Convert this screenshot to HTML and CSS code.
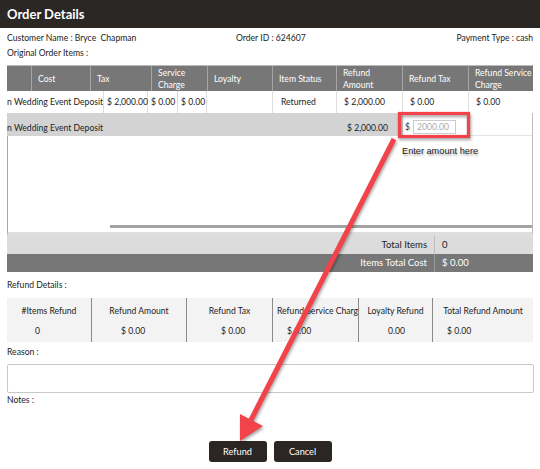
FILE: index.html
```html
<!DOCTYPE html>
<html>
<head>
<meta charset="utf-8">
<link rel="stylesheet" href="styles.css">
</head>
<body>
<div class="page">
  <div class="title">Order Details</div>
  <div class="info">
    <span>Customer Name : Bryce &nbsp;Chapman</span>
    <span>Order ID : 624607</span>
    <span class="pay">Payment Type : cash</span>
  </div>
  <div class="label first">Original Order Items :</div>

  <div class="grid">
    <div class="hdr">
      <div class="c"></div>
      <div class="c">Cost</div>
      <div class="c">Tax</div>
      <div class="c">Service<br>Charge</div>
      <div class="c">Loyalty</div>
      <div class="c">Item Status</div>
      <div class="c">Refund<br>Amount</div>
      <div class="c">Refund Tax</div>
      <div class="c">Refund Service<br>Charge</div>
    </div>
    <div class="row1">
      <div class="c name">n Wedding Event Deposit</div>
      <div class="c">$ 2,000.00</div>
      <div class="c">$ 0.00</div>
      <div class="c">$ 0.00</div>
      <div class="c"></div>
      <div class="c">Returned</div>
      <div class="c">$ 2,000.00</div>
      <div class="c">$ 0.00</div>
      <div class="c">$ 0.00</div>
    </div>
    <div class="row2">
      <div class="shade">
        <span class="name">n Wedding Event Deposit</span>
        <span class="amt">$ 2,000.00</span>
      </div>
      <div class="inputcell">
        <span class="cur">$</span>
        <input class="amount" type="text" placeholder="2000.00">
      </div>
      <div class="blank"></div>
    </div>
    <div class="body">
      <div class="scroll"></div>
    </div>
    <div class="tot light">
      <div class="tl">Total Items</div>
      <div class="tv">0</div>
    </div>
    <div class="tot dark">
      <div class="tl">Items Total Cost</div>
      <div class="tv">$ 0.00</div>
    </div>
  </div>

  <div class="label refund-label">Refund Details :</div>
  <div class="refund">
    <div class="rc"><div class="rh">#Items Refund</div><div class="rv">0</div></div>
    <div class="rc"><div class="rh">Refund Amount</div><div class="rv">$ 0.00</div></div>
    <div class="rc"><div class="rh">Refund Tax</div><div class="rv">$ 0.00</div></div>
    <div class="rc"><div class="rh">Refund Service Charge</div><div class="rv">$ 0.00</div></div>
    <div class="rc"><div class="rh">Loyalty Refund</div><div class="rv">0.00</div></div>
    <div class="rc"><div class="rh">Total Refund Amount</div><div class="rv">$ 0.00</div></div>
  </div>

  <div class="label reason">Reason :</div>
  <div class="textbox"></div>
  <div class="label notes">Notes :</div>

  <div class="buttons">
    <button class="btn">Refund</button>
    <button class="btn">Cancel</button>
  </div>

  <svg class="annot" width="540" height="469" viewBox="0 0 540 469">
    <g class="red">
      <rect x="399.5" y="113.5" width="69" height="23" fill="none" stroke="#f2434b" stroke-width="3.2"/>
      <line x1="394" y1="139" x2="251" y2="420" stroke="#f2434b" stroke-width="5"/>
      <polygon points="240,441 240,414 263,426" fill="#f2434b"/>
    </g>
  </svg>
  <div class="hint">Enter amount here</div>
</div>
</body>
</html>
```

FILE: styles.css
```css
* { box-sizing: border-box; }
html, body { margin: 0; padding: 0; background: #fff; }
body {
  font-family: Lato, "Open Sans", sans-serif;
  font-size: 8.6px;
  color: #222;
}
.page {
  position: relative;
  width: 540px;
  height: 469px;
  overflow: hidden;
}
.title {
  height: 28px;
  line-height: 28px;
  background: #2b2724;
  color: #fff;
  font-size: 13px;
  font-weight: bold;
  padding-left: 7px;
}
.info {
  display: grid;
  grid-template-columns: 229px 1fr auto;
  margin: 3px 7px 0 7px;
  height: 14px;
  line-height: 14px;
}
.label {
  height: 14px;
  line-height: 14px;
  padding-left: 7px;
}
.label.first { margin-top: 1px; margin-bottom: 5px; }

.grid {
  margin: 0 7px;
  width: 526px;
}
.hdr, .row1 {
  display: grid;
}
.hdr {
  grid-template-columns: 25px 59px 61px 56px 65px 64px 66px 66px 64px;
  height: 26px;
  background: #777;
  color: #fff;
  border-top: 1px solid #bbb;
}
.hdr .c {
  display: flex;
  align-items: center;
  padding-left: 6px;
  line-height: 12px;
  border-right: 1px solid #a5a5a5;
  white-space: nowrap;
}
.hdr .c:last-child { border-right: none; }
.row1 {
  grid-template-columns: 97px 44px 30px 29px 66px 64px 66px 66px 64px;
  height: 22px;
  align-items: stretch;
}
.row1 .c {
  display: flex;
  align-items: center;
  padding-left: 3px;
  border-right: 1px solid #ddd;
  white-space: nowrap;
}
.row1 .c:nth-child(6) { padding-left: 8px; }
.row1 .c:nth-child(7),
.row1 .c:nth-child(8),
.row1 .c:nth-child(9) { padding-left: 7px; }
.row1 .c:last-child { border-right: none; }
.row1 .c.name { padding-left: 0; overflow: hidden; }

.row2 {
  display: grid;
  grid-template-columns: 396px 66px 64px;
  height: 23px;
}
.shade {
  background: #d3d3d3;
  display: flex;
  align-items: flex-end;
  padding-bottom: 2px;
  line-height: 12px;
}
.shade .name { width: 340px; }
.inputcell {
  display: flex;
  align-items: flex-end;
  padding-bottom: 1px;
  padding-left: 2px;
  border-bottom: 1px solid #e2e2e2;
}
.cur {
  color: #2b3140;
  margin-right: 3px;
  line-height: 14px;
}
.amount {
  width: 43px;
  height: 14px;
  border: 1px solid #ccc;
  padding: 0 0 0 3px;
  font-family: Lato, sans-serif;
  font-size: 8.6px;
  color: #aaa;
  outline: none;
}
.amount::placeholder { color: #aaa; }
.blank {
  border-bottom: 1px solid #e2e2e2;
  border-right: 1px solid #bbb;
}
.body {
  height: 100px;
  border-left: 1px solid #a8a8a8;
  border-right: 1px solid #bbb;
  border-bottom: 4px solid #dedede;
  display: flex;
  flex-direction: column;
  justify-content: flex-end;
  padding-bottom: 4px;
}
.scroll {
  margin-left: 102px;
  height: 3px;
  background: #a3a3a3;
}
.tot {
  display: grid;
  grid-template-columns: 428px 1fr;
  height: 18px;
  line-height: 18px;
  font-size: 9.5px;
}
.tot .tl {
  text-align: right;
  padding-right: 7px;
  border-right: 1px solid #bdbdbd;
}
.tot .tv { padding-left: 7px; }
.tot.light { background: #dcdcdc; }
.tot.dark { background: #777; color: #fff; }
.tot.dark .tl { border-right-color: #9a9a9a; }

.refund-label { margin-top: 6px; margin-bottom: 6px; }
.refund {
  margin: 0 7px;
  display: grid;
  grid-template-columns: 84px 95px 86px 86px 74px 101px;
  height: 44px;
  background: #f3f3f3;
}
.rc {
  display: flex;
  flex-direction: column;
  border-left: 1px solid #8a8a8a;
  overflow: hidden;
  white-space: nowrap;
}
.rc:first-child { border-left: none; }
.rh {
  height: 26px;
  line-height: 26px;
  text-align: center;
}
.rv { height: 14px; line-height: 14px; }
.rc:nth-child(1) .rv { padding-left: 28px; }
.rc:nth-child(2) .rv { padding-left: 29px; }
.rc:nth-child(3) .rv { padding-left: 34px; }
.rc:nth-child(4) .rh { text-align: left; padding-left: 4px; }
.rc:nth-child(4) .rv { padding-left: 14px; }
.rc:nth-child(5) .rv { padding-left: 29px; }
.rc:nth-child(6) .rv { padding-left: 14px; }

.reason { margin-top: 3px; }
.textbox {
  margin: 5px 6px 0 7px;
  height: 29px;
  border: 1px solid #c8c8c8;
  border-radius: 2px;
}
.notes { margin-top: 0; }

.buttons {
  display: flex;
  justify-content: center;
  gap: 7px;
  margin-top: 34px;
}
.btn {
  width: 58px;
  height: 21px;
  background: #2b2623;
  color: #fff;
  border: none;
  border-radius: 3px;
  font-family: Lato, sans-serif;
  font-size: 9.2px;
  padding: 0;
}

.annot {
  position: absolute;
  left: 0;
  top: 0;
  pointer-events: none;
}
.annot .red { filter: drop-shadow(1px 2px 1.5px rgba(0,0,0,0.35)); }
.hint {
  position: absolute;
  left: 402px;
  top: 146px;
  font-family: "Liberation Sans", Arial, sans-serif;
  font-size: 9.2px;
  color: #222;
  text-shadow: 1px 2px 2px rgba(0,0,0,0.35);
}
```
